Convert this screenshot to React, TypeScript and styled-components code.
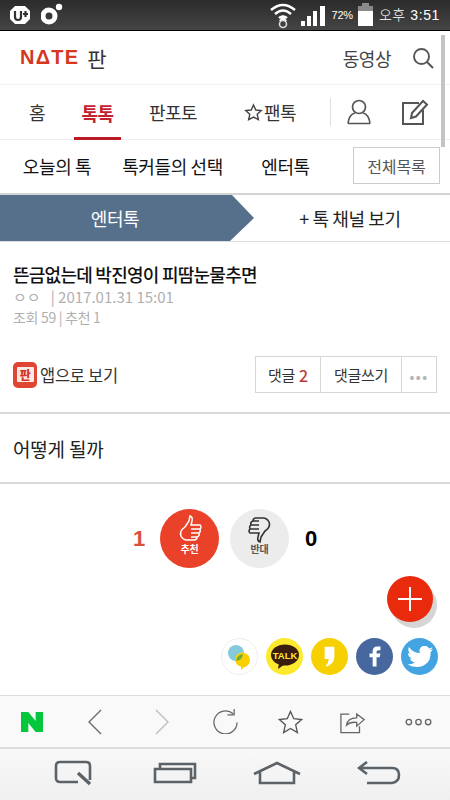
import React from "react";
import styled, { createGlobalStyle } from "styled-components";

const Global = createGlobalStyle`
  html, body { margin: 0; padding: 0; background: #fff; }
  * { box-sizing: border-box; }
  body { font-family: "Noto Sans CJK KR", "Noto Sans", sans-serif; }
`;

const Screen = styled.div`
  position: relative;
  width: 450px;
  height: 800px;
  overflow: hidden;
  display: flex;
  flex-direction: column;
  background: #fff;
  color: #222;
`;

const StatusBar = styled.div`
  height: 31px;
  flex: none;
  display: flex;
  align-items: center;
  justify-content: space-between;
  padding: 0 10px 0 8px;
  background: linear-gradient(#2b2b2b, #454545);
  border-bottom: 1px solid #000;
`;

const StatusGroup = styled.div<{ $gap: number }>`
  display: flex;
  align-items: center;
  gap: ${(p) => p.$gap}px;
`;

const Percent = styled.span`
  color: #fff;
  font-family: "Liberation Sans", sans-serif;
  font-size: 11px;
  letter-spacing: -0.2px;
  line-height: 1;
  margin: 0 2px;
  white-space: nowrap;
`;

const Clock = styled.span`
  color: #fff;
  font-family: "Liberation Sans", "Noto Sans CJK KR", sans-serif;
  font-size: 14px;
  font-weight: 300;
  letter-spacing: 0.6px;
  line-height: 1;
  margin-left: 3px;
  white-space: nowrap;
`;

const Header = styled.div`
  height: 54px;
  flex: none;
  display: flex;
  align-items: center;
  justify-content: space-between;
  padding: 0 16px 0 20px;
  border-bottom: 1px solid #f0f0f0;
`;

const Brand = styled.div`
  display: flex;
  align-items: center;
  gap: 8px;
`;

const Logo = styled.span`
  font-family: "Liberation Sans", sans-serif;
  font-weight: 700;
  font-size: 20px;
  letter-spacing: 1.2px;
  color: #d5371f;
`;

const BrandText = styled.span`
  font-size: 21px;
  color: #333;
`;

const HeaderRight = styled.div`
  display: flex;
  align-items: center;
  gap: 21px;
  font-size: 18px;
  letter-spacing: -0.5px;
  color: #444;
`;

const Nav = styled.div`
  height: 55px;
  flex: none;
  display: flex;
  align-items: center;
  border-bottom: 1px solid #eee;
`;

const NavItem = styled.div<{ $w: number; $active?: boolean }>`
  position: relative;
  width: ${(p) => p.$w}px;
  height: 100%;
  display: flex;
  align-items: center;
  justify-content: center;
  gap: 1px;
  font-size: 18px;
  letter-spacing: -0.5px;
  white-space: nowrap;
  font-weight: ${(p) => (p.$active ? 700 : 400)};
  color: ${(p) => (p.$active ? "#c4202f" : "#333")};
  border-bottom: ${(p) => (p.$active ? "3px solid #bb1a27" : "none")};
  padding-top: ${(p) => (p.$active ? "3px" : "0")};
  margin-bottom: ${(p) => (p.$active ? "-1px" : "0")};
`;

const NavIcons = styled.div`
  display: flex;
  align-items: center;
  height: 28px;
  margin-left: 15px;
  border-left: 1px solid #ddd;
  padding-left: 16px;
  gap: 30px;
`;

const SubNav = styled.div`
  height: 55px;
  flex: none;
  display: flex;
  align-items: center;
  padding: 0 10px 2px 0;
  border-bottom: 2px solid #d4d4d4;
`;

const SubItem = styled.div<{ $w: number }>`
  width: ${(p) => p.$w}px;
  text-align: center;
  font-size: 18px;
  letter-spacing: -0.4px;
  color: #111;
  white-space: nowrap;
`;

const AllButton = styled.div`
  margin-left: auto;
  width: 87px;
  height: 37px;
  display: flex;
  align-items: center;
  justify-content: center;
  border: 1px solid #ccc;
  font-size: 16px;
  color: #555;
  letter-spacing: -0.1px;
`;

const Tabs = styled.div`
  height: 47px;
  flex: none;
  display: flex;
  border-bottom: 1px solid #ddd;
  position: relative;
`;

const ActiveTab = styled.div`
  width: 254px;
  height: 46px;
  flex: none;
  display: flex;
  align-items: center;
  justify-content: center;
  padding-right: 24px;
  margin-right: -2px;
  background: #56708c;
  clip-path: polygon(0 0, 232px 0, 254px 23px, 230px 46px, 0 46px);
  color: #fff;
  font-size: 18px;
  letter-spacing: -0.4px;
`;

const OtherTab = styled.div`
  flex: 1;
  display: flex;
  align-items: center;
  justify-content: center;
  padding-right: 2px;
  font-size: 18px;
  letter-spacing: -0.4px;
  color: #222;
`;

const Article = styled.div`
  height: 172px;
  flex: none;
  padding: 19px 13px 0;
  border-bottom: 2px solid #d9d9d9;
`;

const Title = styled.div`
  font-size: 18px;
  font-weight: 500;
  line-height: 26px;
  letter-spacing: -0.75px;
  color: #111;
  white-space: nowrap;
`;

const Meta = styled.div`
  font-size: 15px;
  line-height: 20px;
  color: #b0b0b0;
  white-space: nowrap;
`;

const MetaSmall = styled(Meta)`
  font-size: 14px;
  letter-spacing: -0.3px;
`;

const Actions = styled.div`
  display: flex;
  align-items: center;
  justify-content: space-between;
  margin-top: 29px;
`;

const AppLink = styled.div`
  display: flex;
  align-items: center;
  gap: 3px;
  font-size: 16.5px;
  letter-spacing: -0.3px;
  color: #333;
`;

const AppBadge = styled.div`
  width: 24px;
  height: 26px;
  border-radius: 5px;
  background: #e04433;
  display: flex;
  align-items: center;
  justify-content: center;
`;

const AppBadgeInner = styled.span`
  width: 17px;
  height: 15px;
  background: #fbe9e6;
  color: #d5371f;
  border-radius: 1px;
  display: flex;
  align-items: center;
  justify-content: center;
  font-size: 12px;
  line-height: 1;
  font-weight: 900;
`;

const ButtonGroup = styled.div`
  display: flex;
  height: 37px;
  border: 1px solid #d6d6d6;
`;

const GroupButton = styled.div<{ $w: number }>`
  width: ${(p) => p.$w}px;
  display: flex;
  align-items: center;
  justify-content: center;
  gap: 4px;
  font-size: 15px;
  letter-spacing: -0.3px;
  color: #333;
  & + & {
    border-left: 1px solid #d6d6d6;
  }
`;

const Count = styled.span`
  color: #c0393b;
  font-weight: 500;
  font-size: 16px;
`;

const Dots = styled.span`
  color: #b5b5b5;
  font-size: 13px;
  font-weight: 700;
  letter-spacing: 1.5px;
  margin-top: 4px;
`;

const Body = styled.div`
  height: 70px;
  flex: none;
  display: flex;
  align-items: center;
  padding: 0 13px;
  font-size: 19px;
  letter-spacing: -0.2px;
  color: #222;
  border-bottom: 2px solid #d9d9d9;
`;

const Content = styled.div`
  flex: 1;
  position: relative;
`;

const VoteRow = styled.div`
  display: flex;
  align-items: center;
  padding: 25px 0 0 133px;
`;

const VoteNumber = styled.span<{ $up?: boolean }>`
  width: ${(p) => (p.$up ? "27px" : "auto")};
  margin-left: ${(p) => (p.$up ? "0" : "5px")};
  font-family: "Liberation Sans", sans-serif;
  font-weight: 700;
  font-size: 22px;
  color: ${(p) => (p.$up ? "#d9503f" : "#000")};
`;

const VoteButton = styled.div<{ $up?: boolean }>`
  width: 59px;
  height: 59px;
  margin-right: 11px;
  border-radius: 50%;
  display: flex;
  flex-direction: column;
  align-items: center;
  padding-top: 6px;
  background: ${(p) => (p.$up ? "#ea4228" : "#ececec")};
  color: ${(p) => (p.$up ? "#fff" : "#555")};
  font-size: 10px;
  font-weight: 700;
  line-height: 12px;
  letter-spacing: -0.3px;
`;

const Fab = styled.div`
  position: absolute;
  left: 387px;
  top: 92px;
  width: 46px;
  height: 46px;
  border-radius: 50%;
  background: #e92a0d;
  box-shadow: 4px 6px 0 #d5d5d5;
  display: flex;
  align-items: center;
  justify-content: center;
`;

const ShareRow = styled.div`
  position: absolute;
  right: 12px;
  top: 154px;
  display: flex;
  gap: 8px;
`;

const ShareCircle = styled.div<{ $bg: string; $line?: boolean }>`
  width: 37px;
  height: 37px;
  border-radius: 50%;
  background: ${(p) => p.$bg};
  border: ${(p) => (p.$line ? "1px solid #eee" : "none")};
  display: flex;
  align-items: center;
  justify-content: center;
  overflow: hidden;
`;

const BrowserBar = styled.div`
  height: 54px;
  flex: none;
  display: grid;
  grid-template-columns: 64px 62px 72px 54px 76px 50px 72px;
  align-items: center;
  background: #f9f9f9;
  border-top: 1px solid #ddd;
  border-bottom: 2px solid #dcdcdc;
`;

const BarCell = styled.div`
  display: flex;
  justify-content: center;
  align-items: center;
  &:last-child {
    padding-left: 8px;
  }
`;

const SystemBar = styled.div`
  height: 51px;
  flex: none;
  display: flex;
  align-items: center;
  background: linear-gradient(#f8f8f8, #f0f0f0);
  padding: 0 0 3px 54px;
  gap: 56px;
  & > svg:first-child {
    margin-right: 5px;
  }
`;

const ScrollThumb = styled.div`
  position: absolute;
  left: 441px;
  top: 35px;
  width: 4px;
  height: 112px;
  background: #c4c4c4;
`;

const stroke = { fill: "none", stroke: "#555", strokeWidth: 1.7 };
const sys = { fill: "none", stroke: "#5b6268", strokeWidth: 2.6 };

export default function App() {
  return (
    <Screen>
      <Global />
      <StatusBar>
        <StatusGroup $gap={9}>
          <svg width="24" height="24" viewBox="0 0 24 24">
            <path d="M7 3h10l5 5v8l-5 5H7l-5-5V8z" fill="#fff" />
            <path d="M7 8v6q0 3 3 3t3-3V8M15 11h5M17.5 8v6" fill="none" stroke="#333" strokeWidth="2.2" />
          </svg>
          <svg width="22" height="24" viewBox="0 0 22 24">
            <circle cx="8" cy="13" r="6" fill="none" stroke="#fff" strokeWidth="5" />
            <circle cx="18" cy="4" r="3.2" fill="#fff" />
          </svg>
        </StatusGroup>
        <StatusGroup $gap={3}>
          <svg width="28" height="28" viewBox="0 0 28 28">
            <path d="M2 9Q14-1 26 9M6 13q8-7 16 0M10 17q4-3 8 0" fill="none" stroke="#fff" strokeWidth="2.4" />
            <path d="M14 14l4 6h-8z" fill="#fff" />
            <circle cx="14" cy="23" r="3.5" fill="none" stroke="#ddd" strokeWidth="1.6" />
          </svg>
          <svg width="26" height="24" viewBox="0 0 26 24">
            <path d="M1 18h4v5H1zM7 13h4v10H7zM13 8h4v15h-4zM20 3h5v20h-5z" fill="#fff" />
          </svg>
          <Percent>72%</Percent>
          <svg width="15" height="24" viewBox="0 0 15 24">
            <path d="M4 0h7v3H4zM0 3h15v6H0z" fill="#8a8a8a" />
            <path d="M0 8h15v15H0z" fill="#fff" />
          </svg>
          <Clock>오후 3:51</Clock>
        </StatusGroup>
      </StatusBar>

      <Header>
        <Brand>
          <Logo>NΔTE</Logo>
          <BrandText>판</BrandText>
        </Brand>
        <HeaderRight>
          <span>동영상</span>
          <svg width="22" height="22" viewBox="0 0 22 22" {...stroke} strokeWidth="1.9">
            <circle cx="9.5" cy="9.5" r="7.5" />
            <path d="M15 15l6 6" />
          </svg>
        </HeaderRight>
      </Header>

      <Nav>
        <NavItem $w={74}>홈</NavItem>
        <NavItem $w={47} $active>톡톡</NavItem>
        <NavItem $w={104}>판포토</NavItem>
        <NavItem $w={90}>
          <svg width="19" height="19" viewBox="0 0 24 24" fill="none" stroke="#444" strokeWidth="1.8">
            <path d="M12 2.5l2.9 6.3 6.9.8-5.1 4.7 1.4 6.8-6.1-3.4-6.1 3.4 1.4-6.8-5.1-4.7 6.9-.8z" />
          </svg>
          팬톡
        </NavItem>
        <NavIcons>
          <svg width="24" height="26" viewBox="0 0 24 26" {...stroke}>
            <circle cx="12" cy="8" r="6.5" />
            <path d="M1 24.5q1-9 7-10.500M23 24.500q-1-9-7-10.500M1 24.500h22" />
          </svg>
          <svg width="28" height="28" viewBox="0 0 28 28" {...stroke} strokeWidth="2">
            <path d="M18 5H2v21h20V12" />
            <path d="M10 20l1-5L22 3l4 3.500-11 12z" />
          </svg>
        </NavIcons>
      </Nav>

      <SubNav>
        <SubItem $w={114}>오늘의 톡</SubItem>
        <SubItem $w={117}>톡커들의 선택</SubItem>
        <SubItem $w={109}>엔터톡</SubItem>
        <AllButton>전체목록</AllButton>
      </SubNav>

      <Tabs>
        <ActiveTab>엔터톡</ActiveTab>
        <OtherTab>+ 톡 채널 보기</OtherTab>
      </Tabs>

      <Article>
        <Title>뜬금없는데 박진영이 피땀눈물추면</Title>
        <Meta>ㅇㅇ &nbsp; | 2017.01.31 15:01</Meta>
        <MetaSmall>조회 59 | 추천 1</MetaSmall>
        <Actions>
          <AppLink>
            <AppBadge>
              <AppBadgeInner>판</AppBadgeInner>
            </AppBadge>
            앱으로 보기
          </AppLink>
          <ButtonGroup>
            <GroupButton $w={64}>댓글 <Count>2</Count></GroupButton>
            <GroupButton $w={81}>댓글쓰기</GroupButton>
            <GroupButton $w={35}><Dots>•••</Dots></GroupButton>
          </ButtonGroup>
        </Actions>
      </Article>

      <Body>어떻게 될까</Body>

      <Content>
        <VoteRow>
          <VoteNumber $up>1</VoteNumber>
          <VoteButton $up>
            <svg width="26" height="28" viewBox="0 0 26 28" fill="none" stroke="#fff" strokeWidth="1.5">
              <path d="M8 12l4-6 1-5q3 1 2 5l-1 4h9q2 2 0 4 1 3-1 4 1 3-2 4 0 3-3 3H10q-4 0-6-4-2-5 4-9zM14 14h9M14 18h8M14 22h7" />
            </svg>
            추천
          </VoteButton>
          <VoteButton>
            <svg width="26" height="28" viewBox="0 0 26 28" fill="none" stroke="#333" strokeWidth="1.6">
              <path d="M18 16l-4 6-1 5q-3-1-2-5l1-4H3q-2-2 0-4-1-3 1-4-1-3 2-4 0-3 3-3h7q4 0 6 4 2 5-4 9zM12 14H3M12 10H4M12 6H6" />
            </svg>
            반대
          </VoteButton>
          <VoteNumber>0</VoteNumber>
        </VoteRow>

        <Fab>
          <svg width="24" height="24" viewBox="0 0 24 24" stroke="#fff" strokeWidth="2">
            <path d="M12 0v24M0 12h24" />
          </svg>
        </Fab>

        <ShareRow>
          <ShareCircle $bg="#fff" $line>
            <svg width="28" height="28" viewBox="0 0 28 28">
              <circle cx="10" cy="10" r="8" fill="#83cbdc" />
              <path d="M9 17a7.500 7.500 0 1 1 9 7.300L15 27v-3.500A7.500 7.500 0 0 1 9 17z" fill="#fbd000" />
              <path d="M10 18a8 8 0 0 0 7-7 7.500 7.500 0 0 0-7 7z" fill="#6fa93a" />
            </svg>
          </ShareCircle>
          <ShareCircle $bg="#fdea2f">
            <svg width="32" height="28" viewBox="0 0 32 28">
              <ellipse cx="16" cy="12" rx="14" ry="10.500" fill="#3a1d0d" />
              <path d="M10 20l-1 6 7-5z" fill="#3a1d0d" />
              <text x="16" y="15.500" fontSize="9.500" fontWeight="700" fontFamily="Liberation Sans" textAnchor="middle" fill="#fdea2f">TALK</text>
            </svg>
          </ShareCircle>
          <ShareCircle $bg="#f6d000">
            <svg width="13" height="25" viewBox="0 0 16 26">
              <path d="M2 1h12v12q0 8-8 12H3q4-4 4-9H2z" fill="#fff" />
            </svg>
          </ShareCircle>
          <ShareCircle $bg="#47689f">
            <svg width="14" height="25" viewBox="0 0 18 26">
              <path d="M6 26V14H2v-5h4V6q0-6 6-6h4v5h-3q-2 0-2 2v2h5l-1 5H11v12z" fill="#fff" />
            </svg>
          </ShareCircle>
          <ShareCircle $bg="#44a4e1">
            <svg width="26" height="22" viewBox="0 0 26 22">
              <path d="M26 3q-1.500 1-3 1 2-1 2.500-3-1.500 1-3.500 1.500A5 5 0 0 0 13 7Q6 7 2 1q-2 4 1.500 7L1 7q0 4 4 5.500H3q1 3 5 4-3 2-7.500 2 12 6 20-2 3.500-4 3-10z" fill="#fff" />
            </svg>
          </ShareCircle>
        </ShareRow>
      </Content>

      <BrowserBar>
        <BarCell>
          <svg width="24" height="22" viewBox="0 0 26 24">
            <path d="M1 1h8l8 10V1h8v22h-8L9 13v10H1z" fill="#06c63b" />
          </svg>
        </BarCell>
        <BarCell>
          <svg width="14" height="26" viewBox="0 0 14 26" fill="none" stroke="#666" strokeWidth="1.3">
            <path d="M13 1L1 13l12 12" />
          </svg>
        </BarCell>
        <BarCell>
          <svg width="14" height="26" viewBox="0 0 14 26" fill="none" stroke="#bbb" strokeWidth="1.3">
            <path d="M1 1l12 12L1 25" />
          </svg>
        </BarCell>
        <BarCell>
          <svg width="25" height="25" viewBox="0 0 26 26" fill="none" stroke="#666" strokeWidth="1.3">
            <path d="M21 5a12 12 0 1 0 4 9" />
            <path d="M15 6h7V0" />
          </svg>
        </BarCell>
        <BarCell>
          <svg width="25" height="24" viewBox="0 0 26 25" fill="none" stroke="#555" strokeWidth="1.4">
            <path d="M13 1.500l3.400 7.600 8.100.9-6.100 5.400 1.800 8.100-7.200-4.200-7.200 4.200 1.800-8.100L1.500 10l8.100-.9z" />
          </svg>
        </BarCell>
        <BarCell>
          <svg width="26" height="25" viewBox="0 0 28 26" fill="none" stroke="#666" strokeWidth="1.4">
            <path d="M10 5H1v20h20v-7" />
            <path d="M7 17q1-8 11-8V5l8 6-8 7v-4q-7-1-11 3z" />
          </svg>
        </BarCell>
        <BarCell>
          <svg width="27" height="8" viewBox="0 0 28 8" fill="none" stroke="#666" strokeWidth="1.400">
            <circle cx="4" cy="4" r="2.800" />
            <circle cx="14" cy="4" r="2.800" />
            <circle cx="24" cy="4" r="2.800" />
          </svg>
        </BarCell>
      </BrowserBar>

      <SystemBar>
        <svg width="38" height="26" viewBox="0 0 38 26" {...sys}>
          <path d="M24 22H6q-4 0-4-4V6q0-4 4-4h26q4 0 4 4v14" />
          <path d="M24 13l12 11" strokeWidth="3.400" />
        </svg>
        <svg width="44" height="22" viewBox="0 0 44 22" {...sys}>
          <path d="M2 7h36v13H2zM7 7V2h35v14h-4" />
        </svg>
        <svg width="48" height="24" viewBox="0 0 48 24" {...sys}>
          <path d="M1 13L24 2l23 11M7 11v11h34V11" />
        </svg>
        <svg width="44" height="24" viewBox="0 0 44 24" {...sys}>
          <path d="M10 1L2 7l8 6M2 7h33q7 0 7 7t-7 8H10" />
        </svg>
      </SystemBar>

      <ScrollThumb />
    </Screen>
  );
}
